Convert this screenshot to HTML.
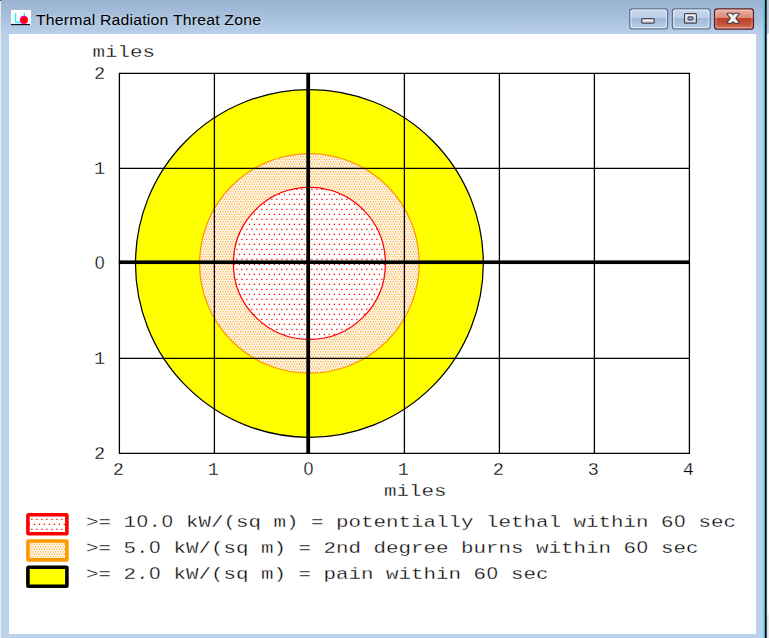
<!DOCTYPE html>
<html><head><meta charset="utf-8"><title>Thermal Radiation Threat Zone</title>
<style>
html,body{margin:0;padding:0;}
body{width:769px;height:638px;overflow:hidden;position:relative;background:#fff;font-family:"Liberation Sans",sans-serif;}
#out-l{position:absolute;left:0;top:0;width:2px;height:638px;background:#e8e8e8;}
#out-r{position:absolute;left:766px;top:0;width:3px;height:638px;background:linear-gradient(to bottom,#bcc8d4 0,#c4d0dc 33px,#fff 34px,#fff 612px,#ececec 616px);}
#win{position:absolute;left:1.3px;top:0;width:763.2px;height:638px;background:#bbd2ea;}
#tb{position:absolute;left:0;top:0;width:100%;height:34px;background:linear-gradient(to bottom,#9ab4d2 0,#a6bfdc 50%,#b8d0ea 100%);}
#edge-c{position:absolute;left:762px;top:0;width:6px;height:638px;background:linear-gradient(to right,rgba(187,210,234,0) 0.4px,#4fc6ee 2.3px,#1c93b4 3.0px,#05090b 3.15px,#0a0c0e 4.2px,rgba(120,120,120,.8) 4.8px,rgba(200,200,200,0) 5.6px);}
#edge-k{display:none;}
#client{position:absolute;left:8.9px;top:34.2px;width:747px;height:600.2px;background:#fff;}
#title{position:absolute;left:35.9px;top:8.2px;height:24px;line-height:24px;font-size:14.9px;letter-spacing:0.2px;transform:scaleX(1.06);transform-origin:0 0;color:#000;white-space:nowrap;text-shadow:0 0 5px rgba(255,255,255,.5);}
.btn{position:absolute;top:7.8px;height:21.6px;border-radius:3.5px;box-sizing:border-box;border:1.2px solid #62789a;box-shadow:inset 0 0 0 1.2px rgba(255,255,255,.55);}
#bmin,#bmax{background:linear-gradient(to bottom,#c5d7ea 0,#b9cde5 48%,#a3bcdb 52%,#b3cae4 100%);}
#bmin{left:629.2px;width:38.6px;}
#bmax{left:671.8px;width:38.6px;}
#bcls{left:714px;width:39.7px;border-color:#4f1f28;background:linear-gradient(to bottom,#e9aa9c 0,#db8673 48%,#c1432a 52%,#cf6a4c 100%);}
svg{position:absolute;left:0;top:0;}
.m{font-family:"Liberation Mono",monospace;font-size:17.4px;fill:#000;stroke:#fff;stroke-width:0.3px;white-space:pre;}
.z{font-family:"Liberation Sans",sans-serif;}
</style></head><body>
<div id="out-l"></div><div id="out-r"></div>
<div id="win"><div id="tb"></div></div>
<div id="edge-c"></div><div id="edge-k"></div>
<div id="client"></div>
<div id="title">Thermal Radiation Threat Zone</div>
<svg width="769" height="638" viewBox="0 0 769 638">
<rect x="0" y="0" width="1.2" height="1" fill="#5a5a5a"/><rect x="1.2" y="0" width="1" height="1" fill="#8a96a8"/>
<!-- app icon -->
<rect x="11" y="10" width="20" height="15.2" fill="#fff"/>
<rect x="11" y="23.9" width="19" height="1.3" fill="#111"/>
<path d="M15.6 13V22.1H21.5" stroke="#0ff" stroke-width="1.3" fill="none"/>
<path d="M24.4 13V16" stroke="#0ff" stroke-width="1.3" fill="none"/>
<circle cx="23.85" cy="19.9" r="4.1" fill="#f0f"/>
<circle cx="24.15" cy="19.9" r="3.5" fill="#f00"/>
<!-- caption buttons -->
<defs>
<linearGradient id="gb" x1="0" y1="0" x2="0" y2="1"><stop offset="0" stop-color="#c6d7ea"/><stop offset="0.46" stop-color="#bdd0e7"/><stop offset="0.47" stop-color="#9fb8d7"/><stop offset="1" stop-color="#bcd1e8"/></linearGradient>
<linearGradient id="gc" x1="0" y1="0" x2="0" y2="1"><stop offset="0" stop-color="#ecb3a6"/><stop offset="0.46" stop-color="#dc8875"/><stop offset="0.47" stop-color="#c0402a"/><stop offset="0.8" stop-color="#c9573e"/><stop offset="1" stop-color="#dc8a70"/></linearGradient>
<linearGradient id="gg" x1="0" y1="0" x2="0" y2="1"><stop offset="0" stop-color="#fbfbfb"/><stop offset="1" stop-color="#d0d0d4"/></linearGradient>
<clipPath id="cx"><rect x="724" y="12.8" width="18" height="11"/></clipPath><clipPath id="cx2"><rect x="724" y="13.8" width="18" height="9"/></clipPath>
</defs>
<g>
<rect x="629.8" y="8.8" width="37.8" height="20.1" rx="2.7" fill="url(#gb)" stroke="#5f6f8c" stroke-width="1.25"/>
<rect x="631.05" y="10.05" width="35.3" height="17.6" rx="2" fill="none" stroke="#fff" stroke-opacity=".5" stroke-width="1.2"/>
<rect x="672.4" y="8.8" width="37.8" height="20.1" rx="2.7" fill="url(#gb)" stroke="#5f6f8c" stroke-width="1.25"/>
<rect x="673.65" y="10.05" width="35.3" height="17.6" rx="2" fill="none" stroke="#fff" stroke-opacity=".5" stroke-width="1.2"/>
<rect x="714.6" y="8.8" width="38.8" height="20.4" rx="2.7" fill="url(#gc)" stroke="#581c26" stroke-width="1.3"/>
<rect x="715.9" y="10.1" width="36.2" height="17.8" rx="2" fill="none" stroke="#fff" stroke-opacity=".3" stroke-width="1.2"/>
<!-- minimize glyph -->
<rect x="641.7" y="18.6" width="12.5" height="4.5" rx="0.9" fill="url(#gg)" stroke="#47475c" stroke-width="1.2"/>
<!-- maximize glyph -->
<rect x="684.5" y="13.7" width="11.9" height="9.4" rx="0.9" fill="url(#gg)" stroke="#47475c" stroke-width="1.2"/>
<rect x="688" y="16.9" width="5" height="3" rx="0.6" fill="#8eb0dc" stroke="#47475c" stroke-width="1.1"/>
<!-- close glyph -->
<g clip-path="url(#cx)">
<path d="M728.16 12L738.04 24.5M738.04 12L728.16 24.5" stroke="#4d3340" stroke-width="5.3" fill="none"/>
</g>
<g clip-path="url(#cx2)">
<path d="M728.16 12L738.04 24.5M738.04 12L728.16 24.5" stroke="#f3f3f5" stroke-width="3.2" fill="none"/>
</g>
</g>
<defs>
<pattern id="pr" width="5" height="10" patternUnits="userSpaceOnUse"><rect width="5" height="10" fill="#fff"/><rect x="3.75" y="3.75" width="1.25" height="1.25" fill="#f00"/><rect x="1.25" y="8.75" width="1.25" height="1.25" fill="#f00"/></pattern>
<pattern id="po" width="5" height="5" patternUnits="userSpaceOnUse" patternTransform="translate(0 -0.25)"><rect width="5" height="5" fill="#fff"/><rect x="0" y="1.25" width="1.25" height="1.25" fill="#f90"/><rect x="2.5" y="1.25" width="1.25" height="1.25" fill="#f90"/><rect x="1.25" y="3.75" width="1.25" height="1.25" fill="#f90"/><rect x="3.75" y="3.75" width="1.25" height="1.25" fill="#f90"/></pattern>
</defs>
<circle cx="309.4" cy="263.4" r="173.9" fill="#ff0" stroke="#000" stroke-width="1.25"/>
<circle cx="309.4" cy="263.4" r="109.8" fill="url(#po)" stroke="#f90" stroke-width="1.25"/>
<circle cx="309.4" cy="263.4" r="76.0" fill="url(#pr)" stroke="#f00" stroke-width="1.25"/>
<path d="M119.4 72.80000000000001V454.0M214.4 72.80000000000001V454.0M309.4 72.80000000000001V454.0M404.4 72.80000000000001V454.0M499.4 72.80000000000001V454.0M594.4 72.80000000000001V454.0M689.4 72.80000000000001V454.0M118.80000000000001 73.4H690.0M118.80000000000001 168.4H690.0M118.80000000000001 263.4H690.0M118.80000000000001 358.4H690.0M118.80000000000001 453.4H690.0" stroke="#000" stroke-width="1.3" fill="none"/>
<rect x="306.3" y="72.80000000000001" width="3.75" height="381.2" fill="#000"/>
<rect x="118.80000000000001" y="260.4" width="571.2" height="3.65" fill="#000"/>
<text class="m" transform="translate(92.4 56.6) scale(1.1971 1)">miles</text>
<text class="m" style="font-size:18.6px" transform="translate(94.07 79.2) scale(1.0000 1)">2</text>
<text class="m" style="font-size:18.6px" transform="translate(94.07 174.2) scale(1.0000 1)">1</text>
<text class="m" style="font-size:18.6px" transform="translate(94.07 269.2) scale(1.0000 1)" x="0.63"><tspan class="z" style="font-size:17.82px">0</tspan></text>
<text class="m" style="font-size:18.6px" transform="translate(94.07 364.2) scale(1.0000 1)">1</text>
<text class="m" style="font-size:18.6px" transform="translate(94.07 459.2) scale(1.0000 1)">2</text>
<text class="m" style="font-size:18.6px" transform="translate(112.87 474.6) scale(1.0000 1)">2</text>
<text class="m" style="font-size:18.6px" transform="translate(207.87 474.6) scale(1.0000 1)">1</text>
<text class="m" style="font-size:18.6px" transform="translate(302.77 474.6) scale(1.0000 1)" x="0.63"><tspan class="z" style="font-size:17.82px">0</tspan></text>
<text class="m" style="font-size:18.6px" transform="translate(397.77 474.6) scale(1.0000 1)">1</text>
<text class="m" style="font-size:18.6px" transform="translate(492.77 474.6) scale(1.0000 1)">2</text>
<text class="m" style="font-size:18.6px" transform="translate(587.77 474.6) scale(1.0000 1)">3</text>
<text class="m" style="font-size:18.6px" transform="translate(682.77 474.6) scale(1.0000 1)">4</text>
<text class="m" transform="translate(384.1 495.7) scale(1.1971 1)">miles</text>
<rect x="27.900000000000002" y="514.8" width="39.0" height="18.9" rx="0.7" fill="url(#pr)" stroke="#f00" stroke-width="3.6"/>
<rect x="27.900000000000002" y="541.0" width="39.0" height="18.9" rx="0.7" fill="url(#po)" stroke="#f90" stroke-width="3.6"/>
<rect x="27.900000000000002" y="567.3" width="39.0" height="18.9" rx="0.7" fill="#ff0" stroke="#000" stroke-width="3.6"/>
<text class="m" transform="translate(86 526.6) scale(1.1971 1)" x="0.00 10.44 20.88 31.32 42.35 52.21 63.23 73.09 83.53 93.97 104.42 114.86 125.30 135.74 146.18 156.62 167.07 177.51 187.95 198.39 208.83 219.27 229.71 240.16 250.60 261.04 271.48 281.92 292.36 302.81 313.25 323.69 334.13 344.57 355.01 365.45 375.90 386.34 396.78 407.22 417.66 428.10 438.55 448.99 459.43 469.87 480.31 491.34 501.20 511.64 522.08 532.52">&gt;= 1<tspan class="z" style="font-size:16.67px">0</tspan>.<tspan class="z" style="font-size:16.67px">0</tspan> kW/(sq m) = potentially lethal within 6<tspan class="z" style="font-size:16.67px">0</tspan> sec</text>
<text class="m" transform="translate(86 552.9) scale(1.1971 1)" x="0.00 10.44 20.88 31.32 41.77 52.79 62.65 73.09 83.53 93.97 104.42 114.86 125.30 135.74 146.18 156.62 167.07 177.51 187.95 198.39 208.83 219.27 229.71 240.16 250.60 261.04 271.48 281.92 292.36 302.81 313.25 323.69 334.13 344.57 355.01 365.45 375.90 386.34 396.78 407.22 417.66 428.10 438.55 448.99 460.01 469.87 480.31 490.75 501.20">&gt;= 5.<tspan class="z" style="font-size:16.67px">0</tspan> kW/(sq m) = 2nd degree burns within 6<tspan class="z" style="font-size:16.67px">0</tspan> sec</text>
<text class="m" transform="translate(86 579.1) scale(1.1971 1)" x="0.00 10.44 20.88 31.32 41.77 52.79 62.65 73.09 83.53 93.97 104.42 114.86 125.30 135.74 146.18 156.62 167.07 177.51 187.95 198.39 208.83 219.27 229.71 240.16 250.60 261.04 271.48 281.92 292.36 302.81 313.25 323.69 334.72 344.57 355.01 365.45 375.90">&gt;= 2.<tspan class="z" style="font-size:16.67px">0</tspan> kW/(sq m) = pain within 6<tspan class="z" style="font-size:16.67px">0</tspan> sec</text>
</svg>
</body></html>
